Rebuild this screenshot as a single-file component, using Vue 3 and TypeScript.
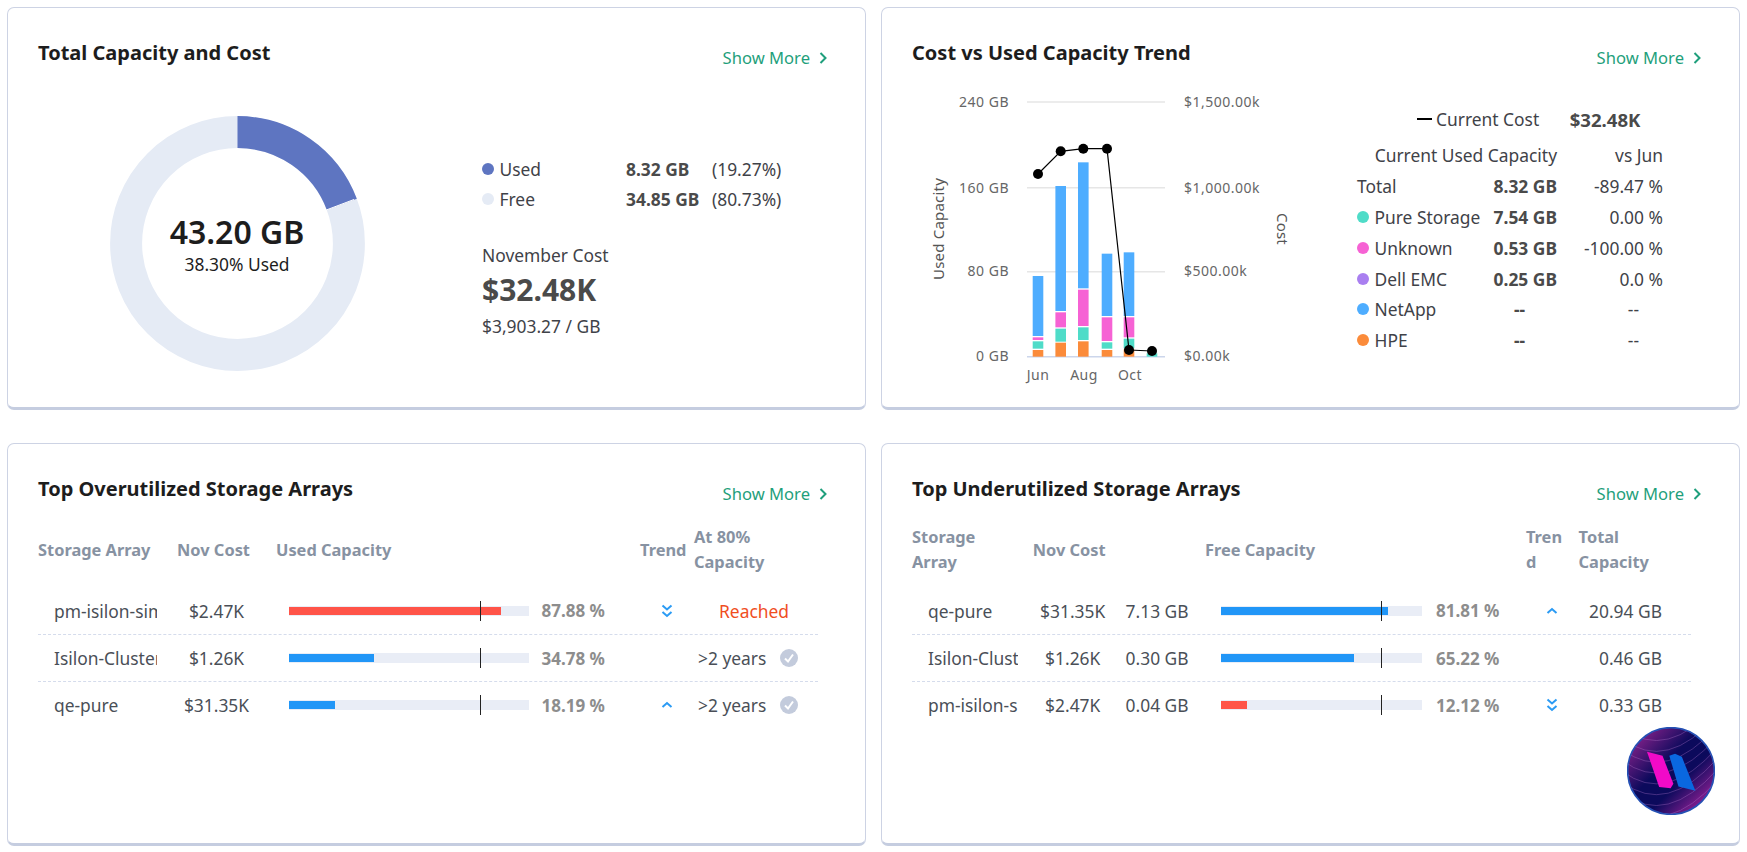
<template>
  <div class="page">
    <!-- total capacity -->
    <section class="card">
      <div class="head">
        <h2>Total Capacity and Cost</h2>
        <a class="more">Show More
          <svg width="10" height="14" viewBox="0 0 10 14"><path d="M2.5 2 L7.5 7 L2.5 12" /></svg>
        </a>
      </div>
      <div class="capacity">
        <div class="donut">
          <svg width="255" height="255" viewBox="0 0 255 255">
            <circle cx="127.5" cy="127.5" r="111.4" class="ring" />
            <circle cx="127.5" cy="127.5" r="111.4" class="ring-used" :stroke-dasharray="usedDash" transform="rotate(-90 127.5 127.5)" />
            <line x1="207" y1="97.5" x2="244" y2="83.5" stroke="#fff" stroke-width="1" />
          </svg>
          <div class="donut-text">
            <strong>43.20 GB</strong>
            <span>38.30% Used</span>
          </div>
        </div>
        <div class="stats">
          <div v-for="l in legend" :key="l.name" class="legend-row">
            <span class="name"><i class="dot" :style="{ background: l.color }"></i>{{ l.name }}</span>
            <b>{{ l.value }}</b>
            <span>{{ l.pct }}</span>
          </div>
          <div class="cost-label">November Cost</div>
          <div class="cost-value">$32.48K</div>
          <div class="cost-unit">$3,903.27 / GB</div>
        </div>
      </div>
    </section>

    <!-- trend -->
    <section class="card">
      <div class="head">
        <h2>Cost vs Used Capacity Trend</h2>
        <a class="more">Show More
          <svg width="10" height="14" viewBox="0 0 10 14"><path d="M2.5 2 L7.5 7 L2.5 12" /></svg>
        </a>
      </div>
      <div class="trend">
        <svg class="chart" width="380" height="310" viewBox="920 80 380 310">
          <line v-for="g in grid" :key="g" x1="1027" x2="1165" :y1="g" :y2="g" stroke="#e6e6e6" stroke-width="1.5" />
          <line x1="1027" x2="1165" y1="356.7" y2="356.7" stroke="#ccd6eb" stroke-width="1.5" />
          <g v-for="(s, i) in segments" :key="i">
            <rect :x="s.x" :y="s.y" :width="s.w" :height="s.h" :fill="s.color" />
          </g>
          <polyline :points="linePoints" fill="none" stroke="#000" stroke-width="1.2" />
          <circle v-for="(p, i) in points" :key="i" :cx="p[0]" :cy="p[1]" r="5" fill="#000" />
          <g class="axis">
            <text v-for="a in leftAxis" :key="a.t" x="1009" :y="a.y" text-anchor="end">{{ a.t }}</text>
            <text v-for="a in rightAxis" :key="a.t" x="1184" :y="a.y">{{ a.t }}</text>
            <text v-for="a in months" :key="a.t" :x="a.x" y="380" text-anchor="middle">{{ a.t }}</text>
            <text class="title-axis" transform="translate(944 229) rotate(-90)" text-anchor="middle">Used Capacity</text>
            <text class="title-axis" transform="translate(1277 229) rotate(90)" text-anchor="middle">Cost</text>
          </g>
        </svg>
        <div class="panel">
          <div class="current">
            <i class="dash"></i><span class="current-label">Current Cost</span><b>$32.48K</b>
          </div>
          <div class="vendors">
            <div class="vendor-head">Current Used Capacity</div>
            <div class="vs">vs Jun</div>
            <template v-for="v in vendors" :key="v.name">
              <div class="vendor"><i v-if="v.color" class="dot" :style="{ background: v.color }"></i>{{ v.name }}</div>
              <b class="num" :class="{ none: v.used === '--' }">{{ v.used }}</b>
              <div class="num" :class="{ none2: v.diff === '--' }">{{ v.diff }}</div>
            </template>
          </div>
        </div>
      </div>
    </section>

    <!-- overutilized -->
    <section class="card">
      <div class="head">
        <h2>Top Overutilized Storage Arrays</h2>
        <a class="more">Show More
          <svg width="10" height="14" viewBox="0 0 10 14"><path d="M2.5 2 L7.5 7 L2.5 12" /></svg>
        </a>
      </div>
      <div class="table over">
        <div class="row th">
          <div>Storage Array</div>
          <div>Nov Cost</div>
          <div>Used Capacity</div>
          <div>Trend</div>
          <div>At 80% Capacity</div>
        </div>
        <div v-for="r in over" :key="r.name" class="row td">
          <div class="cell-name">{{ r.name }}</div>
          <div class="cell-cost">{{ r.cost }}</div>
          <div class="cell-bar">
            <div class="track">
              <div class="fill" :style="{ width: r.fill + '%', background: r.color }"></div>
              <i class="marker"></i>
            </div>
            <span class="pct">{{ r.pct }}</span>
          </div>
          <div class="cell-trend">
            <svg v-if="r.trend === 'down'" width="12" height="14" viewBox="0 0 12 14"><path d="M1.5 1.5 L6 5.5 L10.5 1.5 M1.5 8 L6 12 L10.5 8" /></svg>
            <svg v-else-if="r.trend === 'up'" width="12" height="14" viewBox="0 0 12 14"><path d="M1.5 9 L6 5 L10.5 9" /></svg>
          </div>
          <div v-if="r.reached" class="cell-reached">Reached</div>
          <div v-else class="cell-eta">
            <span>&gt;2 years</span>
            <svg width="18" height="18" viewBox="0 0 18 18"><circle cx="9" cy="9" r="9" fill="#c3cbdc" /><path d="M5 9.5 L8 12.5 L13 5.5" fill="none" stroke="#fff" stroke-width="2" /></svg>
          </div>
        </div>
      </div>
    </section>

    <!-- underutilized -->
    <section class="card">
      <div class="head">
        <h2>Top Underutilized Storage Arrays</h2>
        <a class="more">Show More
          <svg width="10" height="14" viewBox="0 0 10 14"><path d="M2.5 2 L7.5 7 L2.5 12" /></svg>
        </a>
      </div>
      <div class="table under">
        <div class="row th">
          <div class="th-array">Storage Array</div>
          <div>Nov Cost</div>
          <div></div>
          <div>Free Capacity</div>
          <div class="th-trend">Trend</div>
          <div>Total Capacity</div>
        </div>
        <div v-for="r in under" :key="r.name" class="row td">
          <div class="cell-name">{{ r.name }}</div>
          <div class="cell-cost">{{ r.cost }}</div>
          <div class="cell-gb">{{ r.free }}</div>
          <div class="cell-bar">
            <div class="track">
              <div class="fill" :style="{ width: r.fill + '%', background: r.color }"></div>
              <i class="marker"></i>
            </div>
            <span class="pct">{{ r.pct }}</span>
          </div>
          <div class="cell-trend">
            <svg v-if="r.trend === 'down'" width="12" height="14" viewBox="0 0 12 14"><path d="M1.5 1.5 L6 5.5 L10.5 1.5 M1.5 8 L6 12 L10.5 8" /></svg>
            <svg v-else-if="r.trend === 'up'" width="12" height="14" viewBox="0 0 12 14"><path d="M1.5 9 L6 5 L10.5 9" /></svg>
          </div>
          <div class="cell-total">{{ r.total }}</div>
        </div>
      </div>
    </section>

    <!-- floating assistant badge -->
    <svg class="badge" width="88" height="88" viewBox="53 37 260 260">
      <defs>
        <clipPath id="disc"><circle cx="183" cy="167" r="128" /></clipPath>
        <linearGradient id="discFill" x1="0.1" y1="0.15" x2="0.85" y2="0.9">
          <stop offset="0" stop-color="#7a1f86" />
          <stop offset="0.4" stop-color="#0c0a5c" />
          <stop offset="0.65" stop-color="#0c0a5c" />
          <stop offset="1" stop-color="#8a1f92" />
        </linearGradient>
      </defs>
      <circle cx="183" cy="167" r="128" fill="url(#discFill)" stroke="#2450b4" stroke-width="5" />
      <g clip-path="url(#disc)" fill="none" stroke="#b77ad0" stroke-opacity="0.4" stroke-width="2.5">
        <path v-for="s in stripes" :key="s" :d="s" />
      </g>
      <path d="M112 110 L158 122 L190 205 L182 218 L148 214 Z" fill="#f20ac8" />
      <path d="M178 122 L195 116 L215 125 L255 225 L205 213 Z" fill="#0a68e0" />
    </svg>
  </div>
</template>

<script setup lang="ts">
interface Row {
  name: string
  cost: string
  pct: string
  fill: number
  color: string
  trend?: 'up' | 'down'
  reached?: boolean
  free?: string
  total?: string
}

const RED = '#ff5449'
const BLUE = '#2196f7'

const usedDash = `${(2 * Math.PI * 111.4 * 0.1927).toFixed(1)} 1000`

const legend = [
  { name: 'Used', value: '8.32 GB', pct: '(19.27%)', color: '#5e75c1' },
  { name: 'Free', value: '34.85 GB', pct: '(80.73%)', color: '#e5ebf5' }
]

const vendors = [
  { name: 'Total', color: '', used: '8.32 GB', diff: '-89.47 %' },
  { name: 'Pure Storage', color: '#4fdcc8', used: '7.54 GB', diff: '0.00 %' },
  { name: 'Unknown', color: '#f662d4', used: '0.53 GB', diff: '-100.00 %' },
  { name: 'Dell EMC', color: '#a97ff0', used: '0.25 GB', diff: '0.0 %' },
  { name: 'NetApp', color: '#4eadff', used: '--', diff: '--' },
  { name: 'HPE', color: '#fb8b3a', used: '--', diff: '--' }
]

const over: Row[] = [
  { name: 'pm-isilon-sim', cost: '$2.47K', pct: '87.88 %', fill: 88.4, color: RED, trend: 'down', reached: true },
  { name: 'Isilon-Cluster', cost: '$1.26K', pct: '34.78 %', fill: 35.3, color: BLUE },
  { name: 'qe-pure', cost: '$31.35K', pct: '18.19 %', fill: 19.2, color: BLUE, trend: 'up' }
]

const under: Row[] = [
  { name: 'qe-pure', cost: '$31.35K', free: '7.13 GB', pct: '81.81 %', fill: 83, color: BLUE, trend: 'up', total: '20.94 GB' },
  { name: 'Isilon-Cluster', cost: '$1.26K', free: '0.30 GB', pct: '65.22 %', fill: 66, color: BLUE, total: '0.46 GB' },
  { name: 'pm-isilon-sim', cost: '$2.47K', free: '0.04 GB', pct: '12.12 %', fill: 13, color: RED, trend: 'down', total: '0.33 GB' }
]

// chart numbers are read off the screenshot, in page pixels
const grid = [102, 187.7, 271.7]
const leftAxis = [
  { t: '240 GB', y: 107 },
  { t: '160 GB', y: 193 },
  { t: '80 GB', y: 276 },
  { t: '0 GB', y: 361 }
]
const rightAxis = [
  { t: '$1,500.00k', y: 107 },
  { t: '$1,000.00k', y: 193 },
  { t: '$500.00k', y: 276 },
  { t: '$0.00k', y: 361 }
]
const months = [
  { t: 'Jun', x: 1038 },
  { t: 'Aug', x: 1084 },
  { t: 'Oct', x: 1130 }
]

const barX = [1038, 1060.7, 1083.3, 1107, 1129, 1152]
const colors = ['#fb8b3a', '#4fdcc8', '#f662d4', '#4eadff']
// each bar: top/bottom of orange, teal, pink, blue in 3x crop units
const stacks = [
  [[810, 830], [784, 806], [772, 780], [588, 768]],
  [[788, 830], [746, 785], [697, 742], [318, 693]],
  [[784, 830], [742, 780], [629, 738], [247, 625]],
  [[810, 830], [787, 806], [712, 783], [521, 708]],
  [[808, 830], [776, 805], [712, 772], [517, 708]],
  [[830, 830], [820, 830], [830, 830], [830, 830]]
]
const segments = stacks.flatMap((stack, i) =>
  stack
    .map(([top, bottom], j) => ({
      x: barX[i] - 5.3,
      w: 10.6,
      y: 80 + top / 3,
      h: (bottom - top) / 3,
      color: colors[j]
    }))
    .filter(s => s.h > 0)
)

const points = [
  [1038, 174],
  [1060.7, 151.3],
  [1083.3, 148.7],
  [1107, 148.7],
  [1129, 350],
  [1152, 351]
]
const linePoints = points.map(p => p.join(',')).join(' ')

const stripes = [0, 1, 2, 3, 4, 5, 6, 7, 8, 9].map(n => {
  const y = 30 + n * 32
  return `M40 ${y + 10} Q 170 ${y + 110} 320 ${y - 60}`
})
</script>

<style scoped>
.page {
  display: grid;
  grid-template-columns: 859px 859px;
  grid-template-rows: 403px 403px;
  column-gap: 15px;
  row-gap: 33px;
  padding: 7px;
  font-family: "Noto Sans", "Open Sans", sans-serif;
  font-size: 17.4px;
  color: #3f4248;
  position: relative;
}

.card {
  box-sizing: border-box;
  background: #fff;
  border: 1px solid #cdd3e4;
  border-bottom: 3px solid #c5cde0;
  border-radius: 7px;
  padding: 33px 30px 0;
}

.head {
  display: flex;
  justify-content: space-between;
  align-items: flex-start;
  height: 39px;
}

h2 {
  margin: 0;
  font-size: 20px;
  line-height: 24px;
  font-weight: 700;
  color: #1d1d1d;
}

.more {
  display: flex;
  align-items: center;
  gap: 8px;
  margin: 5px 7px 0 0;
  font-size: 16.6px;
  line-height: 24px;
  color: #1f9f7c;
}

.more svg path {
  fill: none;
  stroke: #1f9f7c;
  stroke-width: 2;
}

/* capacity card */
.capacity {
  display: flex;
}

.donut {
  position: relative;
  width: 255px;
  height: 255px;
  margin: 35.5px 0 0 71.5px;
}

.ring,
.ring-used {
  fill: none;
  stroke-width: 32;
}

.ring {
  stroke: #e5ebf5;
}

.ring-used {
  stroke: #5e75c1;
}

.donut-text {
  position: absolute;
  left: 0;
  right: 0;
  top: 96px;
  text-align: center;
  color: #1d1d1d;
}

.donut-text strong {
  display: block;
  font-size: 32px;
  line-height: 40px;
  font-weight: 600;
}

.donut-text span {
  display: block;
  line-height: 24px;
}

.stats {
  margin: 73.5px 0 0 117.5px;
}

.legend-row {
  display: grid;
  grid-template-columns: 144px 86px auto;
  height: 30.5px;
  line-height: 30.5px;
  white-space: nowrap;
}

.legend-row b {
  color: #4a4a4a;
  font-weight: 700;
}

.name {
  display: flex;
  align-items: center;
}

.dot {
  display: inline-block;
  flex: none;
  width: 12px;
  height: 12px;
  border-radius: 50%;
  margin-right: 5.5px;
}

.cost-label {
  margin-top: 28.5px;
  line-height: 24px;
}

.cost-value {
  margin-top: 3px;
  font-size: 30px;
  line-height: 40px;
  font-weight: 700;
  color: #4a4a4a;
}

.cost-unit {
  margin-top: 3.7px;
  line-height: 24px;
}

/* trend card */
.trend {
  display: flex;
}

.chart {
  flex: none;
  margin-left: 8px;
}

.axis text {
  font-size: 14px;
  letter-spacing: 0.5px;
  fill: #666;
}

.axis .title-axis {
  font-size: 15px;
  letter-spacing: 0.2px;
  fill: #555;
}

.panel {
  width: 306px;
  margin-left: 57px;
  padding-top: 24px;
}

.current {
  display: flex;
  align-items: center;
  height: 30px;
  padding-left: 60px;
}

.dash {
  width: 15px;
  height: 2px;
  margin-right: 4px;
  background: #000;
}

.current-label {
  width: 133.7px;
}

.current b {
  font-size: 18.6px;
  font-weight: 700;
  color: #4a4a4a;
}

.vendors {
  display: grid;
  grid-template-columns: 125px 75px 106px;
  grid-auto-rows: 30.8px;
  align-items: center;
  margin-top: 6px;
}

.vendor-head {
  grid-column: 1 / 3;
  text-align: right;
}

.vs,
.num {
  text-align: right;
}

.num {
  white-space: nowrap;
}

b.num {
  font-weight: 700;
  color: #4a4a4a;
}

b.num.none {
  text-align: center;
}

.none2 {
  padding-right: 24px;
}

.vendor {
  display: flex;
  align-items: center;
  white-space: nowrap;
}

/* tables */
.table {
  margin-top: 8px;
}

.row {
  display: grid;
}

.over .row {
  grid-template-columns: 139px 99px 364px 54px 124px;
  width: 780px;
}

.under .row {
  grid-template-columns: 120.7px 80px 92.3px 321px 52.6px 113px;
  width: 779px;
}

.th {
  height: 50px;
  align-items: center;
  margin-bottom: 13px;
  font-size: 16.4px;
  line-height: 25px;
  font-weight: 700;
  color: #8792a2;
}

.td {
  height: 47px;
  align-items: center;
  color: #4a4f57;
}

.td + .td {
  border-top: 1.5px dashed #d5dcec;
  box-sizing: border-box;
}

.th-array {
  width: 90px;
}

.th-trend {
  width: 41px;
  overflow-wrap: anywhere;
}

.cell-name {
  margin: 0 20px 0 16px;
  overflow: hidden;
  white-space: nowrap;
}

.under .cell-name {
  margin-right: 15px;
}

.cell-cost {
  text-align: center;
  white-space: nowrap;
}

.over .cell-cost {
  padding-right: 20px;
}

.cell-gb {
  padding-right: 16.4px;
  text-align: right;
  white-space: nowrap;
}

.cell-bar {
  display: flex;
  align-items: center;
  padding-left: 13px;
}

.under .cell-bar {
  padding-left: 16px;
}

.track {
  position: relative;
  flex: none;
  width: 240px;
  height: 10px;
  margin-right: 12.5px;
  background: #e9edf6;
}

.under .track {
  width: 201px;
  margin-right: 14px;
}

.fill {
  height: 8px;
  margin-top: 1px;
  position: absolute;
}

.marker {
  position: absolute;
  left: 79.6%;
  top: -5px;
  width: 1px;
  height: 20px;
  background: #222;
}

.pct {
  font-weight: 700;
  color: #8d8d8d;
  font-size: 17px;
  white-space: nowrap;
}

.cell-trend {
  display: flex;
  justify-content: center;
}

.cell-trend svg path {
  fill: none;
  stroke: #2b9bf4;
  stroke-width: 2;
}

.cell-reached {
  padding-right: 4px;
  text-align: center;
  color: #f04e1e;
}

.cell-eta {
  display: flex;
  align-items: center;
  gap: 14px;
  padding-left: 4px;
  white-space: nowrap;
}

.cell-total {
  padding-right: 29.6px;
  text-align: right;
  white-space: nowrap;
}

.badge {
  position: absolute;
  left: 1627px;
  top: 727px;
}
</style>

<style>
body {
  background: #fff;
  overflow: hidden;
}
</style>
